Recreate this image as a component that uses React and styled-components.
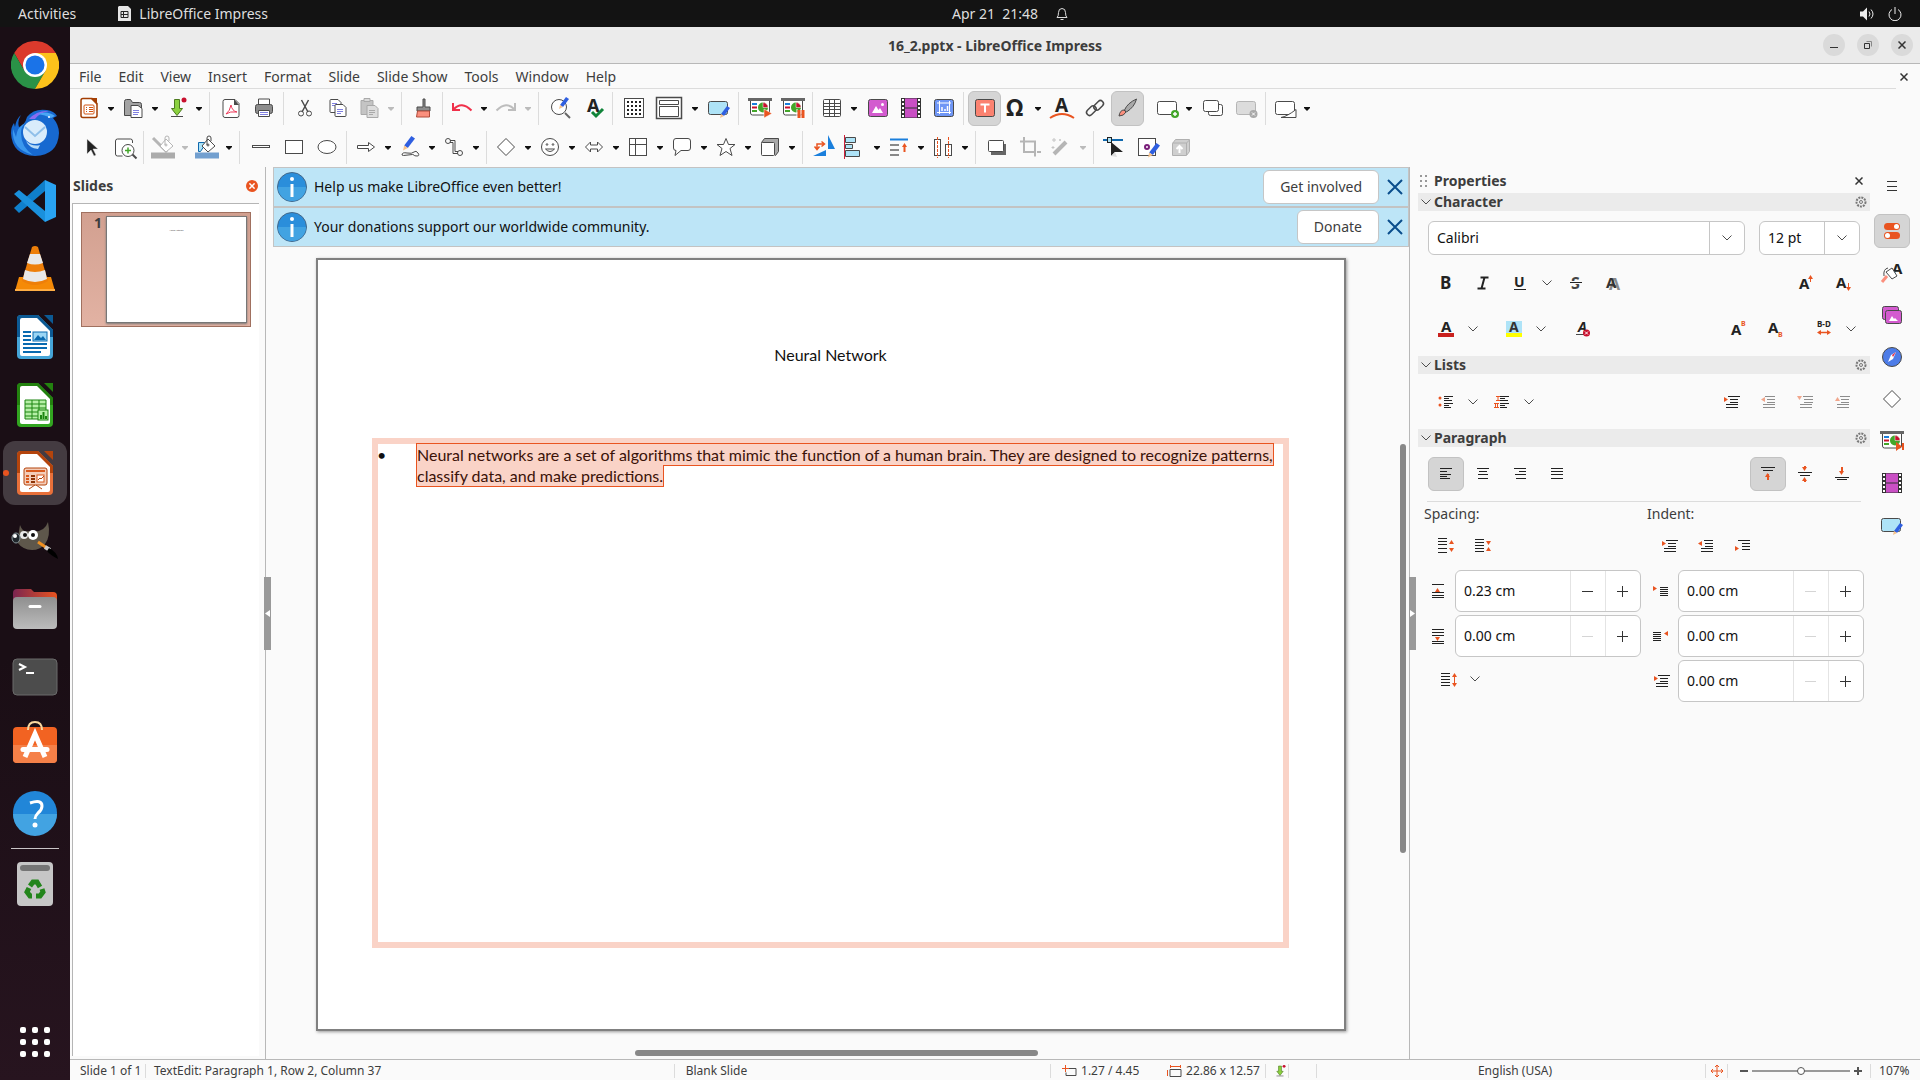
import React, { useState } from 'react';
import styled, { createGlobalStyle } from 'styled-components';

const GlobalStyle = createGlobalStyle`
  * { box-sizing: border-box; }
  body {
    margin: 0;
    font-family: "Noto Sans", "Open Sans", sans-serif;
    font-size: 14px;
    line-height: 20px;
    color: #3d3d3d;
    background: #fafafa;
  }
  button, input, select { font: inherit; color: inherit; margin: 0; }
  svg { display: block; flex: none; }
  svg text { stroke: none; font-family: "Noto Sans", sans-serif; font-weight: 700; }
`;

// ---------- icons ----------

const OR = '#e95420';
const BLUE = '#1a7fdc';
const DARK = '#4a4a4a';

const pencil = (x, y) => (
  <g stroke="none" transform={`translate(${x} ${y})`}>
    <path d="M7 0 L10 2 L4 10 L1 8 Z" fill="#2f5fe0" />
    <path d="M1 8 L4 10 L0 12 Z" fill="#f6c28b" />
  </g>
);

const lines = (x, list, color = '#222') =>
  list.map(([y, w, dx = 0], i) => (
    <path key={i} d={`M${x + dx} ${y}.5h${w}`} stroke={color} />
  ));

const tri = (x, y, dir, color = OR) => {
  const d = {
    r: 'l4 2.500 l-4 2.500z',
    l: 'm4 0 l-4 2.500 l4 2.500z',
    u: 'm0 4 l2.500 -4 l2.500 4z',
    d: 'l5 0 l-2.500 4z',
  }[dir];
  return <path d={`M${x} ${y}${d}`} fill={color} stroke="none" />;
};

const screen = (
  <>
    <path d="M2.500 4v13q0 2 2 2h15q2 0 2-2v-13" fill="#fff" />
    <path d="M0 3.500h24" stroke="#666" strokeWidth="3" />
    <path d="M4 8h5" stroke={BLUE} strokeWidth="2" />
    <path d="M4 11.500h5" stroke="#c8102e" strokeWidth="2" />
    <path d="M4 15h5" stroke="#43a62a" strokeWidth="2" />
    <circle cx="15" cy="11.500" r="5" fill="#43a62a" stroke="none" />
    <path d="M15 11.500v-5a5 5 0 0 1 5 5z" fill="#c8102e" stroke="#fff" strokeWidth=".5" />
  </>
);

const film = (
  <>
    <rect x="2" y="2" width="20" height="20" fill="#333" stroke="none" />
    <path d="M6 2.500h12v19h-12z" fill="#c94fc4" stroke="none" />
    <path d="M6 12h12" stroke="#333" />
    <path d="M4 3v18M20 3v18" stroke="#fff" strokeWidth="2" strokeDasharray="2 2" />
  </>
);

const bucket = (
  <>
    <path d="M13 4l7 7l-7 6l-6-6z" fill="#fff" />
    <path d="M12 10v-7q0-2 2-2t2 2v3" />
    <circle cx="13" cy="10" r="1" />
  </>
);

const ICONS = {
  new: (
    <>
      <path d="M6 2.500h9l5 5v12q0 2-2 2h-12q-2 0-2-2v-15q0-2 2-2z" fill="#fff" stroke="#a33e03" strokeWidth="1.500" />
      <path d="M13 2h7v7z" fill="#a33e03" stroke="none" />
      <rect x="7" y="9" width="10" height="9" rx="1" stroke="#d25310" />
      <path d="M9 11.500h1M12 11.500h4M9 13.500h1M12 13.500h4M9 15.500h1M12 15.500h4" stroke="#d25310" />
    </>
  ),
  open: (
    <>
      <path d="M3.500 19.500v-14q0-2 2-2h4l2 3h7q2 0 2 2v11z" fill="#a3a3a3" />
      <path d="M10 9.500h7l4 3v9h-11z" fill="#fff" />
      <path d="M12 14.500h6M12 16.500h6M12 18.500h5" stroke="#8080e0" />
    </>
  ),
  save: (
    <>
      <path d="M9.500 3.500h5v9h3l-5.500 7l-5.500-7h3z" fill="#8bd13f" stroke="#4d7a20" />
      <path d="M6 20.500h12" />
      <circle cx="19" cy="4" r="2.500" fill="#c8102e" stroke="none" />
    </>
  ),
  pdf: (
    <>
      <path d="M6 3.500h10l4 4v12q0 2-2 2h-12q-2 0-2-2v-14q0-2 2-2z" fill="#fff" />
      <path d="M15 3v6h5z" fill={DARK} stroke="none" />
      <path d="M7 18q4-3 5-9q1 6 6 7q-7-1-11 2z" stroke="#ec3b5b" />
    </>
  ),
  print: (
    <>
      <path d="M6.500 9v-6h11v6" fill="#fff" />
      <rect x="3.500" y="8.500" width="17" height="9" rx="2" fill="#8d8d8d" />
      <path d="M6.500 14.500h11v6h-11z" fill="#fff" />
      <path d="M8 16.500h8M8 18.500h8" stroke="#8080e0" />
    </>
  ),
  cut: (
    <>
      <path d="M8.500 4l6.500 12M15.500 4l-6.500 12" strokeWidth="1.500" />
      <circle cx="8" cy="17.500" r="2.500" />
      <circle cx="16" cy="17.500" r="2.500" />
    </>
  ),
  copy: (
    <>
      <path d="M5 3.500h7l3 3v10h-10q-1 0-1-1v-11q0-1 1-1z" fill="#fff" />
      <path d="M6 7.500h5M6 9.500h4" stroke="#8080e0" />
      <path d="M10 8.500h7l3 3v8q0 1-1 1h-9q-1 0-1-1v-10q0-1 1-1z" fill="#fff" />
      <path d="M11 13.500h6M11 15.500h6M11 17.500h4" stroke="#8080e0" />
    </>
  ),
  paste: (
    <g stroke="#a9a9a9">
      <path d="M4 4.500h12v14h-12z" fill="#c4c4c4" />
      <path d="M7 2.500h6v3h-6z" fill="#d8d8d8" />
      <path d="M10 9.500h8l3 3v9h-11z" fill="#ddd" />
      <path d="M12 14.500h6M12 16.500h6M12 18.500h4" />
    </g>
  ),
  brush: (
    <>
      <path d="M12 3h2v8h5v4h-13v-4h6z" fill="#8d8d8d" />
      <path d="M6.500 15h12v6h-13z" fill="#fb8f7d" stroke="#b04a3a" />
    </>
  ),
  undo: <path d="M3 7v7h7M3.500 13.500q8-9 18 1" stroke="#f0304a" strokeWidth="2" />,
  redo: <path d="M21 7v7h-7M20.500 13.500q-8-9-18 1" stroke="#bdbdbd" strokeWidth="2" />,
  find: (
    <>
      <circle cx="11" cy="11" r="7.500" fill="#fff" />
      <path d="M17 17l5 5" stroke="#666" strokeWidth="2" />
      {pencil(11, 1)}
    </>
  ),
  spell: (
    <>
      <text x="6" y="16" fontSize="18" fill="#222">A</text>
      <path d="M11 16l4 4l7-7" stroke="#11843a" strokeWidth="3" />
    </>
  ),
  grid: (
    <>
      <rect x="2.500" y="2.500" width="19" height="19" fill="#fff" />
      {[6, 10, 14, 18].map((y) => (
        <path key={y} d={`M5 ${y}h15`} stroke="#222" strokeWidth="2" strokeDasharray="2 2" />
      ))}
    </>
  ),
  views: (
    <>
      <rect x="-.5" y="1.500" width="25" height="21" fill="#fff" strokeWidth="1.500" />
      <path d="M2.500 4.500h19v4h-19zM2.500 10.500h19v10h-19z" />
    </>
  ),
  master: (
    <>
      <rect x="1.500" y="5.500" width="19" height="13" rx="2" fill="#aee3f7" />
      {pencil(13, 10)}
    </>
  ),
  start: (
    <>
      {screen}
      <path d="M16 13l8 4.500l-8 4.500z" fill={OR} stroke="#fff" strokeWidth=".5" />
    </>
  ),
  startHere: (
    <>
      {screen}
      <path d="M16 13v9M24 13v9M20 13v9" stroke="#fff" />
      <path d="M18 14v8M22 14v8" stroke={OR} strokeWidth="3" />
    </>
  ),
  slideEnd: (
    <>
      {screen}
      <path d="M16 13l6 4.500l-6 4.500z" fill={OR} stroke="none" />
      <path d="M23 14v7" stroke={OR} strokeWidth="2" />
    </>
  ),
  table: (
    <>
      <rect x="3.500" y="3.500" width="17" height="17" rx="1" fill="#fff" />
      <path d="M3.500 7.500h17M3.500 10.500h17M3.500 13.500h17M3.500 17.500h17M9.500 3.500v17M14.500 3.500v17" />
    </>
  ),
  image: (
    <>
      <rect x="2.500" y="3.500" width="19" height="17" rx="2" fill="#d35bcf" />
      <path d="M6 17l4-7l2.500 4l1.500-2l3 5z" fill="#fff" stroke="none" />
      <circle cx="16.500" cy="8.500" r="1.500" fill="#fff" stroke="none" />
    </>
  ),
  film,
  chart: (
    <>
      <rect x="2.500" y="3.500" width="19" height="17" rx="2" fill="#6f96f5" />
      <path d="M5 7h14M7.500 5v13M17.500 5v13M5 16.500h14" stroke="#fff" />
      <path d="M10 15v-4M13 15v-2M15.500 15v-5" stroke="#fff" strokeWidth="1.500" />
    </>
  ),
  textbox: (
    <>
      <rect x="2.500" y="3.500" width="19" height="17" rx="2" fill="#fb8270" />
      <path d="M7.500 8.500h9M12 8.500v8" stroke="#fff" strokeWidth="2" />
    </>
  ),
  omega: <text x="2" y="20" fontSize="23" fill="#222">Ω</text>,
  fontwork: (
    <>
      <text x="5" y="16" fontSize="19" fill="#222">A</text>
      <path d="M0 22q12-8 24 0" stroke={OR} strokeWidth="2" />
    </>
  ),
  link: (
    <g strokeWidth="1.500">
      <rect x="10" y="6" width="11" height="6" rx="3" transform="rotate(-45 16 9)" />
      <rect x="3" y="12" width="11" height="6" rx="3" transform="rotate(-45 8 15)" />
    </g>
  ),
  draw: (
    <>
      <path d="M20.500 3q-9 4-12 11l2 2q8-5 10-13z" fill="#a9a9a9" />
      <path d="M8 14q-4 0-5 6q5 0 7-4z" fill="#fb8f7d" />
    </>
  ),
  newSlide: (
    <>
      <rect x="2.500" y="5.500" width="19" height="13" rx="2" fill="#fff" />
      <circle cx="20" cy="18" r="4" fill="#43a62a" stroke="none" />
      <path d="M20 16v4M18 18h4" stroke="#fff" strokeWidth="1.500" />
    </>
  ),
  dupSlide: (
    <>
      <rect x="7.500" y="8.500" width="14" height="11" rx="2" fill="#fff" />
      <rect x="2.500" y="4.500" width="15" height="11" rx="2" fill="#fff" />
    </>
  ),
  delSlide: (
    <>
      <rect x="2.500" y="5.500" width="19" height="13" rx="2" fill="#dcdcdc" stroke="#b5b5b5" />
      <circle cx="19.500" cy="18" r="4" fill="#a9a9a9" stroke="none" />
      <path d="M18 16.500l3 3M21 16.500l-3 3" stroke="#fff" />
    </>
  ),
  layout: (
    <>
      <rect x="2.500" y="5.500" width="19" height="13" rx="2" fill="#fff" />
      <path d="M8 21.500q6-1 15-8v8z" fill="#fff" />
    </>
  ),
  pointer: <path d="M8 4v15l4-4l3 6l2-1l-3-6h5z" fill="#222" stroke="#ddd" strokeWidth=".5" />,
  zoom: (
    <>
      <path d="M20.500 8v-2q0-2-2-2h-13q-2 0-2 2v13q0 2 2 2h5" fill="#fff" />
      <circle cx="16" cy="15.500" r="6" fill="#fff" />
      <path d="M16 12.500v6M13 15.500h6" stroke="#43a62a" strokeWidth="1.500" />
      <path d="M20.500 19.500l4 4" strokeWidth="2" />
    </>
  ),
  lineColor: (
    <>
      <path d="M2 3l14 14" stroke="#b5b5b5" strokeWidth="3" />
      <g stroke="#b5b5b5" transform="translate(2 0)">{bucket}</g>
      <path d="M0 20.500h24" stroke="#ababab" strokeWidth="6" />
    </>
  ),
  fillColor: (
    <>
      <path d="M3.500 7.500h6v3l-4 6h-2z" fill="#aee3f7" stroke="#0f68ad" />
      {bucket}
      <path d="M0 20.500h24" stroke="#729fcf" strokeWidth="6" />
    </>
  ),
  line: <rect x="3.500" y="10.500" width="17" height="2" fill="#fff" />,
  rect: <rect x="3.500" y="5.500" width="17" height="13" fill="#fff" />,
  ellipse: <ellipse cx="12" cy="12" rx="9" ry="6.500" fill="#fff" />,
  arrow: <path d="M3.500 10.500h11v-3l6 4.500l-6 4.500v-3h-11z" fill="#fff" />,
  pencilCurve: (
    <>
      <g transform="translate(5 1) scale(1.2)">{pencil(0, 0)}</g>
      <path d="M4 20q0-3 5-2t7-1t4 1t-1 3t-3-1t-6 0t-6 0z" />
    </>
  ),
  connector: (
    <>
      <circle cx="6" cy="6" r="2.500" />
      <circle cx="18" cy="18" r="2.500" />
      <path d="M8 5.500h5v11h3M8 7.500h3v11h5" />
    </>
  ),
  diamond: <path d="M12 3.500l8.500 8.500l-8.500 8.500l-8.500-8.500z" fill="#fff" />,
  smiley: (
    <>
      <circle cx="12" cy="12" r="8.500" fill="#fff" />
      <circle cx="9" cy="9.500" r=".8" />
      <circle cx="15" cy="9.500" r=".8" />
      <path d="M7.500 14q4.500 5 9 0z" />
    </>
  ),
  doubleArrow: <path d="M3.500 12l5-5v3h7v-3l5 5l-5 5v-3h-7v3z" fill="#fff" />,
  flow: (
    <>
      <rect x="3.500" y="3.500" width="17" height="17" fill="#fff" />
      <path d="M3.500 9.500h17M9.500 3.500v17" />
    </>
  ),
  callout: <path d="M6 3.500h12q2.500 0 2.500 2.500v7q0 2.500-2.500 2.500h-7l-6 5l1-5q-2.500 0-2.500-2.500v-7q0-2.500 2.500-2.500z" fill="#fff" />,
  star: <path d="M12 3.500l2.500 6h6.500l-5 4l2 7l-6-4l-6 4l2-7l-5-4h6.500z" fill="#fff" />,
  cube: (
    <>
      <path d="M3.500 7.500l3-4h14v13l-3 4z" fill="#a9a9a9" />
      <rect x="3.500" y="7.500" width="13" height="13" rx="1" fill="#fff" />
    </>
  ),
  rotate: (
    <>
      <path d="M14 15v6h-13zM16 0l7 14h-7z" fill={BLUE} stroke="none" />
      <path d="M5 14v-5h7M9.500 6.500l3 2.500l-3 2.500M2.500 11.500l2.500 3l2.500-3" stroke={OR} strokeWidth="1.500" />
    </>
  ),
  align: (
    <>
      <path d="M1.500 0v24" stroke="#d0213c" />
      <path d="M2.500 2.500h10v5h-10zM2.500 9.500h7v4h-7zM2.500 15.500h14v6h-14z" fill="#aee3f7" />
    </>
  ),
  arrange: (
    <>
      <path d="M3 4.500h18" stroke={BLUE} strokeWidth="2" />
      <path d="M3 10h9M3 15h9M3 20h9" stroke="#888" strokeWidth="2" />
      <path d="M17.500 17v-6" stroke={OR} strokeWidth="2" />
      {tri(15, 8, 'u')}
    </>
  ),
  distribute: (
    <>
      <rect x="3.500" y="4.500" width="6" height="16" fill="#fff" />
      <rect x="14.500" y="9.500" width="6" height="11" fill="#fff" />
      <path d="M6.500 2v21M17.500 2v21" stroke={OR} strokeDasharray="3 1" />
    </>
  ),
  shadow: (
    <>
      <rect x="6" y="9" width="15" height="11" fill="#666" stroke="none" />
      <rect x="3.500" y="5.500" width="15" height="11" rx="1" fill="#fff" />
    </>
  ),
  crop: <path d="M6 2v15h11M2 6.500h15v15M19 17h4" stroke="#b5b5b5" strokeWidth="2" />,
  wand: (
    <>
      <path d="M5 19l12-12" stroke="#b5b5b5" strokeWidth="4" />
      <path d="M5 3v4M3 5h4M11 4v2M10 5h2M4 11v3M2.500 12.500h3" stroke="#c4c4c4" />
    </>
  ),
  points: (
    <>
      <path d="M0 5h20" stroke="#0f68ad" strokeWidth="2" />
      <rect x="4.500" y="2.500" width="4" height="5" fill="#aee3f7" stroke="#222" />
      <path d="M8 7v14l4-4h8z" fill="#222" stroke="none" />
      <path d="M8 21l4-4l2 5z" fill="#ddd" stroke="none" />
    </>
  ),
  glue: (
    <>
      <rect x="2.500" y="3.500" width="17" height="17" fill="#fff" />
      <circle cx="11" cy="12" r="2" stroke="#7a1f7a" strokeWidth="2" />
      <g transform="translate(12 8) scale(1.2)">{pencil(0, 0)}</g>
    </>
  ),
  extrusion: (
    <g stroke="#b0b0b0">
      <path d="M3.500 8.500l3-4h14v12l-3 4h-14z" fill="#cfcfcf" />
      <path d="M17.500 20v-12h-14M17.500 8l3-3" />
      <path d="M10.500 18v-6M7.500 14l3-3l3 3" stroke="#fff" strokeWidth="2" />
    </g>
  ),
  bold: <text x="6" y="18" fontSize="17" fill="#222">B</text>,
  italic: <path d="M9.500 6.500h8M6.500 17.500h8M13.500 6.500l-3 11" stroke="#222" strokeWidth="2" />,
  underline: (
    <>
      <text x="6" y="16" fontSize="14" fill="#222">U</text>
      <path d="M6 18.500h12" stroke="#222" />
    </>
  ),
  strike: (
    <>
      <text x="7" y="18" fontSize="16" fill="#444">S</text>
      <path d="M6 11.500h12" stroke="#fafafa" strokeWidth="3" />
      <path d="M6 11.500h12" stroke="#222" />
    </>
  ),
  shadowA: (
    <>
      <text x="8" y="19" fontSize="16" fill="#8a8a8a">A</text>
      <text x="5" y="17" fontSize="15" fill="#333">A</text>
    </>
  ),
  grow: (
    <>
      <text x="6" y="18" fontSize="15" fill="#222">A</text>
      <path d="M17.500 11v-5" stroke={OR} />
      {tri(15, 4, 'u')}
    </>
  ),
  shrink: (
    <>
      <text x="6" y="17" fontSize="15" fill="#222">A</text>
      <path d="M18.500 12v5" stroke={OR} />
      {tri(16, 16, 'd')}
    </>
  ),
  fontColor: (
    <>
      <text x="7" y="15" fontSize="15" fill="#222">A</text>
      <path d="M4 18h16" stroke="#c9211e" strokeWidth="4" />
    </>
  ),
  highlight: (
    <>
      <path d="M4 4h16v12h-16z" fill="#aee3f7" stroke="none" />
      <text x="7" y="15" fontSize="14" fill="#333">A</text>
      <path d="M4 18h16" stroke="#ffff00" strokeWidth="4" />
    </>
  ),
  clear: (
    <>
      <text x="7" y="15" fontSize="14" fontStyle="italic" fill="#222">A</text>
      <path d="M5 17.500h9" />
      <circle cx="15.500" cy="16" r="3.500" fill="#c8102e" stroke="none" />
      <path d="M14 14.500l3 3M17 14.500l-3 3" stroke="#fff" />
    </>
  ),
  superscript: (
    <>
      <text x="5" y="18" fontSize="15" fill="#222">A</text>
      <text x="15" y="9" fontSize="7" fill={OR}>B</text>
    </>
  ),
  subscript: (
    <>
      <text x="5" y="16" fontSize="15" fill="#222">A</text>
      <text x="15" y="20" fontSize="7" fill={OR}>B</text>
    </>
  ),
  charSpacing: (
    <>
      <text x="5" y="10" fontSize="8" fill="#222">B-D</text>
      <path d="M7 15.500h10" stroke={OR} strokeWidth="1.500" />
      {tri(5, 13, 'l')}
      {tri(15, 13, 'r')}
    </>
  ),
  bullets: (
    <>
      <circle cx="6" cy="8" r="1.500" fill={OR} stroke="none" />
      <circle cx="6" cy="15" r="1.500" fill={OR} stroke="none" />
      {lines(10, [[6, 9], [8, 5], [10, 8], [13, 9], [15, 5], [17, 7]])}
    </>
  ),
  numbers: (
    <>
      <path d="M6 6.500h4M8 6.500v4M6 10.500h4M4 13.500h5M5.500 13.500v4M7.500 13.500v4M4 17.500h5" stroke={OR} />
      {lines(10, [[6, 9], [8, 5], [10, 8], [13, 9], [15, 5], [17, 7]])}
    </>
  ),
  indentRight: <>{tri(5, 7, 'r')}{lines(7, [[6, 12, 2], [9, 8, 4], [12, 8, 4], [14, 12], [17, 12]])}</>,
  demote: <g opacity=".5">{tri(5, 7, 'l')}{lines(7, [[6, 10, 2], [9, 8, 4], [12, 8, 4], [14, 12], [17, 12]])}</g>,
  moveDown: <g opacity=".5">{tri(4, 6, 'd')}{lines(7, [[6, 10, 3], [9, 9, 4], [12, 9, 4], [14, 12], [17, 12]])}</g>,
  moveUp: <g opacity=".5">{tri(5, 7, 'u')}{lines(7, [[6, 10, 3], [9, 8, 4], [12, 8, 4], [14, 12], [17, 12]])}</g>,
  left: <>{lines(6, [[6, 12], [9, 7], [12, 11], [14, 7], [16, 10]])}</>,
  center: <>{lines(6, [[6, 12], [9, 8, 2], [12, 10, 1], [16, 10, 1]])}</>,
  right: <>{lines(6, [[6, 12], [9, 7, 5], [12, 11, 1], [16, 10, 2]])}</>,
  justify: <>{lines(6, [[6, 12], [9, 12], [12, 12], [16, 12]])}</>,
  vTop: <>{lines(5, [[5, 14], [8, 10, 2]])}<path d="M12 18v-6" stroke={OR} strokeWidth="2" />{tri(9, 11, 'u')}</>,
  vCenter: <>{lines(5, [[10, 14], [13, 10, 2]])}<path d="M12 4v2M12 18v2" stroke={OR} strokeWidth="2" />{tri(9, 5, 'd')}{tri(9, 15, 'u')}</>,
  vBottom: <>{lines(5, [[15, 14], [17, 10, 2]])}<path d="M12 5v5" stroke={OR} strokeWidth="2" />{tri(9, 9, 'd')}</>,
  paraInc: <>{lines(4, [[4, 9], [7, 9], [10, 9], [14, 9], [18, 9]])}{tri(15, 6, 'u')}{tri(15, 14, 'd')}</>,
  paraDec: <>{lines(4, [[5, 9], [8, 9], [11, 9], [14, 9], [17, 9]])}{tri(15, 7, 'd')}{tri(15, 13, 'u')}</>,
  indentDec: <>{tri(4, 7, 'l')}{lines(7, [[6, 9, 3], [9, 8, 4], [12, 8, 4], [14, 12], [17, 12]])}</>,
  hanging: <>{tri(4, 12, 'r')}{lines(7, [[6, 12], [9, 8, 4], [12, 8, 4], [15, 8, 4]])}</>,
  above: <>{lines(6, [[5, 12], [13, 12], [16, 12], [18, 12]])}{tri(9, 9, 'u')}</>,
  below: <>{lines(6, [[5, 12], [8, 12], [11, 12], [17, 12], [19, 12]])}{tri(9, 13, 'd')}</>,
  before: <>{tri(4, 7, 'r')}{lines(11, [[8, 8], [10, 8], [12, 8], [14, 8], [16, 8]])}</>,
  after: <>{tri(15, 7, 'l')}{lines(4, [[8, 8], [10, 8], [12, 8], [14, 8], [16, 8]])}</>,
  lineSpacing: <>{lines(7, [[6, 9], [9, 9], [12, 9], [15, 9], [18, 9]])}<path d="M20.500 9v8" stroke={OR} />{tri(18, 6, 'u')}{tri(18, 16, 'd')}</>,
  menu: <path d="M7 7.500h10M7 12.500h10M7 16.500h10" stroke="#333" />,
  properties: (
    <>
      <rect x="4" y="4" width="16" height="7" rx="3.500" fill={OR} stroke="none" />
      <circle cx="16.500" cy="7.500" r="2.500" fill="#fff" stroke="none" />
      <rect x="4" y="13" width="16" height="7" rx="3.500" fill={OR} stroke="none" />
      <circle cx="7.500" cy="16.500" r="2.500" fill="#fff" stroke="none" />
    </>
  ),
  styles: (
    <>
      <text x="12" y="13" fontSize="15" fill="#222">A</text>
      <path d="M6 11l6-4l5 8l-5 3z" fill="#fff" />
      <path d="M2 21l5-6" stroke="#fb8f7d" strokeWidth="3" />
      <path d="M8 7q-5 1-4 8" />
    </>
  ),
  gallery: (
    <>
      <rect x="2.500" y="3.500" width="16" height="13" rx="2" fill="#d35bcf" />
      <rect x="5.500" y="7.500" width="16" height="13" rx="2" fill="#d35bcf" />
      <path d="M9 18l3-5l2 3l1-1l3 3z" fill="#fff" stroke="none" />
    </>
  ),
  navigator: (
    <>
      <circle cx="12" cy="12" r="9.500" fill="#4d7ce8" />
      <path d="M16 7l-3 7l-5 3l3-7z" fill="#fff" stroke="none" />
      <path d="M16 7l-3 5l-1-2z" fill="#e0304a" stroke="none" />
    </>
  ),
};

const Icon = ({ name, size = 24 }) => (
  <svg width={size} height={size} viewBox="0 0 24 24" fill="none" stroke={DARK} strokeWidth="1" overflow="visible" aria-hidden="true">
    {ICONS[name]}
  </svg>
);

const Chevron = () => (
  <svg width="10" height="6" viewBox="0 0 10 6" fill="none" stroke="#4d4d4d" aria-hidden="true">
    <path d="M.5 .5l4.500 4.500l4.500-4.500" />
  </svg>
);

const Cross = ({ size = 8, color = '#333', width = 1.5 }) => (
  <svg width={size} height={size} viewBox="0 0 8 8" stroke={color} strokeWidth={(width * 8) / size} aria-hidden="true">
    <path d="M.5 .5l7 7M7.500 .5l-7 7" />
  </svg>
);

const Gear = () => (
  <svg width="12" height="12" viewBox="0 0 12 12" fill="none" stroke="#777" aria-hidden="true">
    <circle cx="6" cy="6" r="4.500" strokeWidth="2" strokeDasharray="2 1" />
    <circle cx="6" cy="6" r="1.500" />
  </svg>
);

// ---------- dock icons ----------

const DocIcon = ({ color, light, children }) => (
  <svg width="48" height="48" viewBox="0 0 48 48">
    <path d="M10 2h17l15 15v25q0 4-4 4h-28q-4 0-4-4v-36q0-4 4-4z" fill={light} />
    <path d="M10 2h17l15 15v7h-36v-18q0-4 4-4z" fill={color} />
    <path d="M33 2h9v9z" fill={color} />
    <path d="M11 5h15l13 13v23q0 2-2 2h-26q-2 0-2-2v-34q0-2 2-2z" fill="#fff" />
    {children}
  </svg>
);

const DOCK = [
  {
    label: 'Google Chrome',
    art: (
      <svg width="48" height="48" viewBox="0 0 48 48">
        <path d="M3.200 12A24 24 0 0 1 44.800 12H24L13.600 30Z" fill="#db3a2c" />
        <path d="M3.200 12L13.600 30H34.400L24 48A24 24 0 0 1 3.200 12Z" fill="#2a9247" />
        <path d="M44.800 12A24 24 0 0 1 24 48L34.400 30L24 12Z" fill="#fcc21b" />
        <circle cx="24" cy="24" r="12" fill="#fff" />
        <circle cx="24" cy="24" r="9.500" fill="#1a73e8" />
      </svg>
    ),
  },
  {
    label: 'Thunderbird',
    art: (
      <svg width="48" height="48" viewBox="0 0 48 48">
        <path d="M10 6q-4 6-2 12q6-2 8-10q7-9 20-7q7 1 10 6l-4 2q6 7 6 15q-1 22-24 23q-23-1-24-23q0-6 3-10l1 4q1-8 6-12z" fill="#1769d0" />
        <path d="M2 20q-2 20 20 26q-12-8-12-22q0-6 4-10q-8 4-9 14z" fill="#3a98ee" />
        <path d="M18 10q8-9 20-8q-10 2-14 8z" fill="#8b6cf0" />
        <path d="M27 5q9-4 17 2l-4 2q-6-3-13-4z" fill="#4aa6f5" />
        <circle cx="38" cy="8" r="1" fill="#fff" />
        <circle cx="24" cy="23" r="12" fill="#d9ecfb" />
        <path d="M14 18l10 9l10-9" fill="none" stroke="#8fbfe9" strokeWidth="2" />
        <path d="M15 32q6 6 14 4l-2 4q-9-1-12-8z" fill="#b8dcf7" />
      </svg>
    ),
  },
  {
    label: 'Visual Studio Code',
    art: (
      <svg width="48" height="48" viewBox="0 0 48 48">
        <path d="M34 3L3 31L8 36L34 14Z" fill="#0f7fcb" />
        <path d="M3 17L8 13L34 34V45Z" fill="#1a90dc" />
        <path d="M34 3L45 8V40L34 45Z" fill="#29a3f2" />
      </svg>
    ),
  },
  {
    label: 'VLC',
    art: (
      <svg width="48" height="48" viewBox="0 0 48 48">
        <path d="M8 32h32l4 14h-40z" fill="#f58a07" />
        <path d="M4 44h40v2h-40z" fill="#ffae45" />
        <path d="M21 2q3-2 6 0l10 34q-13 8-26 0z" fill="#ee7f0a" />
        <path d="M19 9h10l3 9q-8 3-16 0z" fill="#e9e9e9" />
        <path d="M14 25q10 4 20 0l2 9q-12 6-24 0z" fill="#e9e9e9" />
      </svg>
    ),
  },
  {
    label: 'LibreOffice Writer',
    art: (
      <DocIcon color="#0c5a94" light="#45a5d8">
        <path d="M12 19h8M12 23h8M12 27h8M12 31h24M12 35h24M12 39h18" stroke="#0a6ab0" strokeWidth="2" />
        <rect x="22" y="19" width="14" height="9" fill="#9bd6f5" stroke="#0a6ab0" />
        <path d="M23 27l4-5l3 3l2-2l3 4z" fill="#0a6ab0" />
      </DocIcon>
    ),
  },
  {
    label: 'LibreOffice Calc',
    art: (
      <DocIcon color="#23820f" light="#32a520">
        <path d="M14 19h21v19h-21z" fill="#b6efa6" />
        <path d="M14 19h21v19h-21zM14 23h21M14 27h21M14 31h21M14 35h21M21 19v19M28 19v19" fill="none" stroke="#1c8510" />
        <rect x="27" y="29" width="10" height="10" fill="#b6efa6" stroke="#1c8510" />
        <path d="M30 38v-4M32.500 38v-7M35 38v-3" stroke="#1c8510" strokeWidth="2" />
      </DocIcon>
    ),
  },
  {
    label: 'LibreOffice Impress',
    active: true,
    art: (
      <DocIcon color="#b4440c" light="#e8703a">
        <rect x="13" y="19" width="23" height="17" rx="2" fill="#f3cdb9" stroke="#b4440c" />
        <path d="M15 22h19M15 27h3M15 30h3M15 33h3" stroke="#d9591c" strokeWidth="2" />
        <path d="M20 27h4M20 30h4M20 33h4" stroke="#8e3406" strokeWidth="2" />
        <rect x="26" y="26" width="7" height="7" fill="#fff" stroke="#d9591c" />
        <path d="M27 31l2-2l1 1l3-3M24 36l-6 4M25 36l6 4" fill="none" stroke="#b4440c" />
      </DocIcon>
    ),
  },
  {
    label: 'GIMP',
    art: (
      <svg width="48" height="48" viewBox="0 0 48 48">
        <path d="M9 8q3 8 8 6q16 3 20-9q3 14-3 22q-5 6-13 6q-9 0-15-8q2-10 3-17z" fill="#5e574b" />
        <circle cx="13" cy="18" r="4" fill="#e8e8e8" />
        <circle cx="22" cy="18" r="5" fill="#fff" />
        <circle cx="14" cy="18" r="2" fill="#111" />
        <circle cx="22" cy="18" r="2" fill="#111" />
        <ellipse cx="5" cy="21" rx="4" ry="5" fill="#20262b" stroke="#8b9aa0" />
        <circle cx="4" cy="19" r="2" fill="#fff" />
        <path d="M27 25l9 6" stroke="#f09020" strokeWidth="3" />
        <path d="M34 30l5 3" stroke="#ccc" strokeWidth="4" />
        <path d="M38 31q8 4 9 11q-8-4-11-8z" fill="#000" />
      </svg>
    ),
  },
  {
    label: 'Files',
    art: (
      <svg width="48" height="48" viewBox="0 0 48 48">
        <defs>
          <linearGradient id="tab"><stop offset="0" stopColor="#7a2550" /><stop offset="1" stopColor="#e95420" /></linearGradient>
          <linearGradient id="body" x2="0" y2="1"><stop offset="0" stopColor="#8f8f8f" /><stop offset="1" stopColor="#bcbcbc" /></linearGradient>
        </defs>
        <path d="M2 16v-8q0-4 4-4h14l3 3h19q4 0 4 4v6z" fill="url(#tab)" />
        <rect x="2" y="12" width="44" height="32" rx="4" fill="url(#body)" />
        <path d="M19 21.500h10" stroke="#fff" strokeWidth="3" strokeLinecap="round" />
      </svg>
    ),
  },
  {
    label: 'Terminal',
    art: (
      <svg width="48" height="48" viewBox="0 0 48 48">
        <rect x="2" y="6" width="44" height="36" rx="4" fill="#4c4c4c" stroke="#6a6a6a" />
        <path d="M8 11l6 3l-6 3M15 20h8" fill="none" stroke="#fff" strokeWidth="2" />
      </svg>
    ),
  },
  {
    label: 'Ubuntu Software',
    art: (
      <svg width="48" height="48" viewBox="0 0 48 48">
        <rect x="2" y="6" width="44" height="36" rx="4" fill="#f26322" />
        <path d="M2 24h44v14q0 4-4 4h-36q-4 0-4-4z" fill="#f58048" />
        <path d="M17 9q0-8 7-8t7 8" fill="none" stroke="#fbd9a0" strokeWidth="2" />
        <path d="M14 36l10-23l10 23" fill="none" stroke="#fff" strokeWidth="5" />
        <path d="M12 28.500h24" stroke="#fff" strokeWidth="5" strokeLinecap="round" />
      </svg>
    ),
  },
  {
    label: 'Help',
    art: (
      <svg width="48" height="48" viewBox="0 0 48 48">
        <circle cx="24" cy="24" r="22" fill="#2186d8" />
        <path d="M2 25a22 22 0 0 0 44 0z" fill="#42a3e2" />
        <path d="M19 14q12-4 12 3q0 4-4 7q-3 3-3 6" fill="none" stroke="#fff" strokeWidth="3" />
        <circle cx="24" cy="36" r="2.500" fill="#fff" />
      </svg>
    ),
  },
];

const TrashArt = () => (
  <svg width="48" height="48" viewBox="0 0 48 48">
    <rect x="6" y="2" width="36" height="44" rx="4" fill="#c6c6c6" />
    <rect x="9" y="5" width="30" height="6" rx="3" fill="#757575" />
    <g fill="none" stroke="#23851b" strokeWidth="5">
      <path d="M19 26l3-4h4l3 5" />
      <path d="M31 29l1 3l-3 4h-4" />
      <path d="M21 36h-2l-3-4l2-4" />
    </g>
  </svg>
);

const GridArt = () => (
  <svg width="32" height="32" viewBox="0 0 32 32" fill="#fff">
    {[1, 13, 25].map((y) => [1, 13, 25].map((x) => <rect key={x + '-' + y} x={x} y={y} width="6" height="6" rx="2" />))}
  </svg>
);

// ---------- layout ----------

const Desktop = styled.div`
  display: flex;
  flex-direction: column;
  height: 100vh;
  overflow: hidden;
`;

const TopBar = styled.header`
  display: grid;
  grid-template-columns: 1fr auto 1fr;
  align-items: center;
  height: 27px;
  padding: 0 18px;
  background: #131313;
  color: #dedede;
`;

const TopGroup = styled.div`
  display: flex;
  align-items: center;
  justify-content: ${(p) => (p.$end ? 'flex-end' : 'flex-start')};
  gap: ${(p) => p.$gap || 8}px;
`;

const TopButton = styled.button`
  display: flex;
  align-items: center;
  gap: 8px;
  padding: 0;
  border: 0;
  background: none;
  white-space: pre;
`;

const Workspace = styled.div`
  display: flex;
  flex: 1;
  min-height: 0;
`;

const Dock = styled.nav`
  display: flex;
  flex-direction: column;
  align-items: center;
  gap: 4px;
  width: 70px;
  padding: 6px 0;
  background: linear-gradient(#1a0e15 60%, #27141f);
`;

const DockItem = styled.button`
  position: relative;
  display: flex;
  align-items: center;
  justify-content: center;
  width: 64px;
  height: 64px;
  padding: 0;
  border: 0;
  border-radius: 12px;
  background: ${(p) => (p.$active ? '#443b41' : 'transparent')};

  &::before {
    content: '';
    display: ${(p) => (p.$active ? 'block' : 'none')};
    position: absolute;
    left: 0;
    width: 6px;
    height: 6px;
    border-radius: 3px;
    background: #e95420;
  }
`;

const DockLine = styled.hr`
  width: 48px;
  margin: -1px 0 -1px;
  border: 0;
  border-top: 1px solid #c9c5c7;
`;

const DockSpace = styled.div`
  flex: 1;
`;

const Window = styled.div`
  display: flex;
  flex-direction: column;
  flex: 1;
  min-width: 0;
`;

const TitleBar = styled.div`
  display: grid;
  grid-template-columns: 1fr auto 1fr;
  align-items: center;
  height: 37px;
  padding: 0 7px;
  border-bottom: 1px solid #b8b8b8;
  background: #ebebeb;
`;

const WindowTitle = styled.h1`
  margin: 0;
  padding-top: 1px;
  font-size: 14px;
  font-weight: 700;
`;

const WindowButtons = styled.div`
  display: flex;
  justify-content: flex-end;
  gap: 12px;
`;

const RoundButton = styled.button`
  display: flex;
  align-items: center;
  justify-content: center;
  width: 22px;
  height: 22px;
  padding: 0;
  border: 0;
  border-radius: 50%;
  background: #dadada;
`;

const MenuBar = styled.div`
  display: flex;
  align-items: center;
  height: 25px;
  padding-right: 12px;
`;

const MenuList = styled.nav`
  display: flex;
  align-items: center;
  gap: 1px;
  flex: 1;
  height: 25px;
  margin-right: 4px;
  padding-left: 1px;
  border-bottom: 1px solid #dcdcdc;
`;

const MenuItem = styled.button`
  padding: 2px 8px 0;
  border: 0;
  background: none;
`;

const PlainButton = styled.button`
  display: flex;
  align-items: center;
  justify-content: center;
  padding: 0;
  border: 0;
  background: none;
`;

const Toolbar = styled.div`
  display: flex;
  align-items: center;
  height: 39px;
  padding-left: 4px;
`;

const ToolButton = styled.button`
  display: flex;
  align-items: center;
  justify-content: center;
  width: ${(p) => p.$w}px;
  height: 35px;
  padding: 0 0 1px ${(p) => (p.$w === 33 ? 1 : 0)}px;
  border: 1px solid ${(p) => (p.$pressed ? '#c2c2c2' : 'transparent')};
  border-radius: 6px;
  background: ${(p) => (p.$pressed ? '#d5d5d5' : 'none')};
`;

const DropButton = styled.button`
  display: flex;
  align-items: center;
  justify-content: center;
  width: 14px;
  height: 35px;
  padding: 1px 0 0;
  border: 0;
  background: none;
`;

const ToolLine = styled.div`
  width: 1px;
  height: 33px;
  margin: 0 4px 0 3px;
  background: ${(p) => (p.$hidden ? 'transparent' : '#dcdcdc')};
`;

const Body = styled.div`
  display: flex;
  flex: 1;
  min-height: 0;
`;

const SlidesPanel = styled.aside`
  display: flex;
  flex-direction: column;
  width: 194px;
  padding: 0 5px 3px 2px;
`;

const PanelHead = styled.div`
  display: flex;
  align-items: center;
  justify-content: space-between;
  height: 36px;
  padding: 2px 1px 0;
  font-weight: 700;
`;

const SlideClose = styled.button`
  display: flex;
  align-items: center;
  justify-content: center;
  width: 12px;
  height: 12px;
  padding: 0;
  border: 0;
  border-radius: 50%;
  background: #e95420;
`;

const SlideList = styled.div`
  flex: 1;
  padding: 8px;
  border: solid #b5b5b5;
  border-width: 1px 0 0 1px;
  background: #fff;
`;

const Thumb = styled.button`
  display: flex;
  align-items: stretch;
  gap: 4px;
  width: 170px;
  height: 115px;
  padding: 3px 3px 3px 12px;
  border: 1px solid #a0705f;
  background: linear-gradient(#d2a090, #e2b2a3);
  font-weight: 700;
  text-align: left;
`;

const ThumbNumber = styled.span`
  margin-top: -3px;
`;

const ThumbPage = styled.span`
  flex: 1;
  padding-top: 12px;
  border: 1px solid #777;
  background: #fff;
  box-shadow: 0 1px 2px #777;
  color: #333;
  font: 2px/3px Lato, sans-serif;
  text-align: center;
`;

const Splitter = styled.div`
  display: flex;
  align-items: center;
  width: 7px;
  background: linear-gradient(#b8b8b8, #b8b8b8) ${(p) => p.$line}px 0 / 1px 100% no-repeat;
`;

const Handle = styled.button`
  display: flex;
  align-items: center;
  justify-content: center;
  width: 7px;
  height: 73px;
  padding: 0;
  border: 0;
  background: #999;
`;

const Center = styled.main`
  display: flex;
  flex-direction: column;
  flex: 1;
  min-width: 0;
  margin-left: 2px;
`;

const InfoBar = styled.div`
  display: flex;
  align-items: center;
  height: 40px;
  padding: 0 5px 0 3px;
  border: 1px solid #c3c3c3;
  background: #bde5f7;
  color: #111;
`;

const InfoText = styled.span`
  flex: 1;
  margin-left: 7px;
`;

const InfoButton = styled.button`
  height: 34px;
  margin-right: 8px;
  padding: 0 16px;
  border: 1px solid #c6c6c6;
  border-radius: 6px;
  background: #fff;
  color: #3d3d3d;
`;

const Canvas = styled.div`
  display: grid;
  grid-template-columns: 1fr 6px;
  grid-template-rows: 1fr 6px;
  column-gap: 54px;
  row-gap: 19px;
  flex: 1;
  min-height: 0;
  padding: 11px 3px 3px 43px;
`;

const Page = styled.section`
  display: flex;
  flex-direction: column;
  padding: 84px 55px 81px 54px;
  border: 2px solid #808080;
  background: #fff;
  box-shadow: 1px 1px 3px #999;
  color: #111;
  font-family: Lato, "Open Sans", sans-serif;
`;

const SlideTitle = styled.h2`
  margin: 0;
  font-size: 16px;
  font-weight: 400;
  line-height: 22px;
  text-align: center;
`;

const TextFrame = styled.div`
  flex: 1;
  margin-top: 72px;
  border: 6px solid #fad3c7;
`;

const BulletList = styled.ul`
  margin: 0;
  padding-left: 39px;
  list-style: none;
  font-size: 16px;
  line-height: 21px;
`;

const Bullet = styled.li`
  &::before {
    content: '•';
    float: left;
    margin-left: -40px;
  }
`;

const Selected = styled.mark`
  padding: 1px 0;
  background: #fad3c7;
  color: #3a1208;
  outline: 1px solid #e95420;
`;

const ScrollV = styled.div`
  display: flex;
  flex-direction: column;
  padding-top: 186px;

  &::after {
    content: '';
    height: 409px;
    border-radius: 3px;
    background: #888;
  }
`;

const ScrollH = styled.div`
  display: flex;
  justify-content: center;
  padding-left: 10px;

  &::after {
    content: '';
    width: 403px;
    border-radius: 3px;
    background: #888;
  }
`;

const Sidebar = styled.aside`
  display: flex;
  width: 504px;
`;

const Deck = styled.div`
  width: 454px;
  padding-left: 2px;
`;

const DeckTitle = styled.div`
  display: flex;
  align-items: center;
  height: 26px;
  padding: 2px 7px 0 2px;
  font-weight: 700;
`;

const DeckName = styled.span`
  flex: 1;
  margin-left: 6px;
`;

const SectionHead = styled.div`
  display: flex;
  align-items: center;
  gap: 3px;
  height: 18px;
  padding: 0 3px;
  background: #ebebeb;
  font-weight: 700;
`;

const SectionName = styled.span`
  flex: 1;
`;

const Controls = styled.div`
  display: flex;
  align-items: center;
  gap: 1px;
  height: ${(p) => p.$h}px;
  padding: 0 10px;
`;

const Push = styled.div`
  flex: 1;
`;

const SmallButton = styled.button`
  display: flex;
  align-items: center;
  justify-content: center;
  width: ${(p) => (p.$arrow ? 16 : 36)}px;
  height: 34px;
  padding: 0;
  border: 1px solid ${(p) => (p.$pressed ? '#c2c2c2' : 'transparent')};
  border-radius: 6px;
  background: ${(p) => (p.$pressed ? '#d5d5d5' : 'none')};
`;

const Gap = styled.div`
  width: ${(p) => p.$w}px;
`;

const Combo = styled.label`
  position: relative;
  display: flex;
  flex: ${(p) => (p.$grow ? 1 : 'none')};
  width: ${(p) => p.$w || 0}px;
  height: 34px;
  border: 1px solid #c6c6c6;
  border-radius: 6px;
  background: #fff;
  color: #111;
`;

const ComboSelect = styled.select`
  width: 100%;
  padding: 0 36px 0 8px;
  border: 0;
  appearance: none;
  background: none;
`;

const ComboArrow = styled.span`
  position: absolute;
  right: 0;
  display: flex;
  align-items: center;
  justify-content: center;
  width: 35px;
  height: 32px;
  border-left: 1px solid #c6c6c6;
  pointer-events: none;
`;

const Rule = styled.hr`
  margin: 0 9px 2px;
  border: 0;
  border-top: 1px solid #dcdcdc;
`;

const Halves = styled.div`
  display: grid;
  grid-template-columns: minmax(0, 1fr) minmax(0, 1fr);
  column-gap: 6px;
  padding: 0 6px;
`;

const Half = styled.div`
  display: flex;
  flex-direction: column;
  gap: 3px;
`;

const HalfLabel = styled.div`
  height: 20px;
`;

const HalfButtons = styled.div`
  display: flex;
  gap: 1px;
  height: 40px;
  padding: 2px 0 0 4px;
`;

const SpinRow = styled.div`
  display: flex;
  align-items: center;
  gap: 5px;
  height: 42px;
  padding-left: 2px;
`;

const SpinBox = styled.div`
  display: flex;
  flex: 1;
  min-width: 0;
  height: 42px;
  border: 1px solid #c6c6c6;
  border-radius: 6px;
  background: #fff;
  color: #111;
`;

const SpinInput = styled.input`
  flex: 1;
  width: 0;
  min-width: 0;
  padding: 0 8px;
  border: 0;
  background: none;
`;

const SpinButton = styled.button`
  display: flex;
  align-items: center;
  justify-content: center;
  width: 35px;
  padding: 0 1px 0 0;
  border: 0;
  border-left: 1px solid #e4e4e4;
  background: none;
`;

const TabBar = styled.nav`
  display: flex;
  flex-direction: column;
  align-items: center;
  gap: 8px;
  flex: 1;
  padding: 2px 6px 0 0;
`;

const Tab = styled(SmallButton)`
  &:first-child { margin-bottom: 3px; }
`;

const StatusBar = styled.footer`
  display: flex;
  align-items: center;
  height: 21px;
  padding-top: 2px;
  border-top: 1px solid #b8b8b8;
  font-size: 12px;
  line-height: 18px;
`;

const Cell = styled.div`
  display: flex;
  align-items: center;
  justify-content: ${(p) => (p.$center ? 'center' : 'flex-start')};
  gap: 4px;
  flex: ${(p) => (p.$grow ? p.$grow + ' 1 0' : 'none')};
  width: ${(p) => (p.$w ? p.$w + 'px' : 'auto')};
  height: 14px;
  padding-left: ${(p) => (p.$pad === undefined ? 8 : p.$pad)}px;
  border-right: 1px solid ${(p) => (p.$last ? 'transparent' : '#dcdcdc')};
  white-space: nowrap;
`;

const ZoomSlider = styled.input`
  width: 98px;
  height: 10px;
  margin: 0;
  appearance: none;
  background: linear-gradient(#999, #999) 0 4px / 100% 2px no-repeat;

  &::-webkit-slider-thumb {
    appearance: none;
    width: 8px;
    height: 8px;
    border: 1px solid #555;
    border-radius: 50%;
    background: #fff;
  }
`;

// ---------- data ----------

const MENUS = ['File', 'Edit', 'View', 'Insert', 'Format', 'Slide', 'Slide Show', 'Tools', 'Window', 'Help'];

// '|' separator, '.' empty gap, '+' has a drop-down, '-' disabled drop-down, '!' pressed
const STANDARD = 'new+ open+ save+ | pdf print | cut copy paste- | brush | undo+ redo- | find spell | grid views+ master | start startHere | table+ image film chart | textbox! omega+ fontwork link draw! . newSlide+ dupSlide delSlide | layout+';
const DRAWING = 'pointer zoom | lineColor- fillColor+ | line rect ellipse | arrow+ pencilCurve+ connector+ | diamond+ smiley+ doubleArrow+ flow+ callout+ star+ cube+ | rotate align+ arrange+ distribute+ | shadow crop wand- | points glue extrusion';

const TABS = ['menu', 'properties', 'styles', 'gallery', 'navigator', 'diamond', 'slideEnd', 'film', 'master'];

const ToolRow = ({ items, label }) => (
  <Toolbar role="toolbar" aria-label={label}>
    {items.split(' ').map((item, i) => {
      if (item === '|' || item === '.') return <ToolLine key={i} $hidden={item === '.'} />;
      const name = item.replace(/[+\-!]/, '');
      const flag = item.slice(name.length);
      const drop = flag === '+' || flag === '-';
      return (
        <React.Fragment key={i}>
          <ToolButton aria-label={name} $w={name === 'views' ? 38 : drop ? 30 : 33} $pressed={flag === '!'}>
            <Icon name={name} />
          </ToolButton>
          {drop && (
            <DropButton aria-label={name + ' options'}>
              <svg width="6" height="4" viewBox="0 0 6 4" fill={flag === '-' ? '#bbb' : '#111'}>
                <path d="M0 0h6v1l-3 3l-3-3z" />
              </svg>
            </DropButton>
          )}
        </React.Fragment>
      );
    })}
  </Toolbar>
);

const Tool = ({ name, pressed }) => (
  <SmallButton aria-label={name} $pressed={pressed}>
    <Icon name={name} />
  </SmallButton>
);

const ToolArrow = ({ name }) => (
  <SmallButton aria-label={name + ' options'} $arrow>
    <Chevron />
  </SmallButton>
);

const Section = ({ title }) => (
  <SectionHead>
    <Chevron />
    <SectionName>{title}</SectionName>
    <PlainButton aria-label={title + ' options'}><Gear /></PlainButton>
  </SectionHead>
);

const Spin = ({ icon, label, initial }) => {
  const [value, setValue] = useState(initial);
  const step = (d) => setValue(Math.max(0, value + d));
  return (
    <SpinRow>
      <Icon name={icon} />
      <SpinBox>
        <SpinInput aria-label={label} value={value.toFixed(2) + ' cm'} readOnly />
        <SpinButton aria-label="Decrease" onClick={() => step(-0.1)}>
          <svg width="11" height="11" stroke={value > 0 ? '#333' : '#d5d5d5'}><path d="M0 5.500h11" /></svg>
        </SpinButton>
        <SpinButton aria-label="Increase" onClick={() => step(0.1)}>
          <svg width="11" height="11" stroke="#333"><path d="M0 5.500h11M5.500 0v11" /></svg>
        </SpinButton>
      </SpinBox>
    </SpinRow>
  );
};

const Info = ({ text, action }) => (
  <InfoBar>
    <svg width="30" height="30" viewBox="0 0 30 30">
      <circle cx="15" cy="15" r="14.500" fill="#2a8edb" stroke="#44688a" />
      <path d="M1 15a14 14 0 0 0 28 0z" fill="#42a3e2" />
      <path d="M15 12v13" stroke="#fff" strokeWidth="3" />
      <circle cx="15" cy="7" r="2" fill="#fff" />
    </svg>
    <InfoText>{text}</InfoText>
    <InfoButton>{action}</InfoButton>
    <PlainButton aria-label="Close"><Cross size={16} color="#0a4d8c" width={2} /></PlainButton>
  </InfoBar>
);

const App = () => {
  const [zoom, setZoom] = useState(50);

  return (
    <Desktop>
      <GlobalStyle />
      <TopBar>
        <TopGroup $gap={42}>
          <TopButton>Activities</TopButton>
          <TopButton>
            <svg width="13" height="15" viewBox="0 0 13 15">
              <path d="M1 0h9l3 3v12h-13v-14z" fill="#e6e6e6" />
              <path d="M3 5.500h7v6h-7zM3 8.500h7M5.500 5.500v6" fill="none" stroke="#222" />
            </svg>
            LibreOffice Impress
          </TopButton>
        </TopGroup>
        <TopGroup $gap={18}>
          <Gap $w={82} />
          <TopButton>Apr 21  21:48</TopButton>
          <svg width="12" height="14" viewBox="0 0 12 14" fill="none" stroke="#dedede">
            <path d="M1 10.500h10q-1.500-1-1.500-5t-3.500-4t-3.500 4t-1.500 5zM4.500 12.500h3" />
          </svg>
        </TopGroup>
        <TopGroup $end $gap={13}>
          <svg width="15" height="14" viewBox="0 0 15 14" fill="none" stroke="#eee">
            <path d="M0 4.500h3l4-4v13l-4-4h-3z" fill="#eee" stroke="none" />
            <path d="M9 4.500q2 2.500 0 5M11 2.500q4 4.500 0 9" />
          </svg>
          <svg width="14" height="14" viewBox="0 0 14 14" fill="none" stroke="#eee">
            <path d="M4 2.500a6 6 0 1 0 6 0M7 0v7" />
          </svg>
        </TopGroup>
      </TopBar>

      <Workspace>
        <Dock>
          {DOCK.map((app) => (
            <DockItem key={app.label} aria-label={app.label} $active={app.active}>{app.art}</DockItem>
          ))}
          <DockLine />
          <DockItem aria-label="Trash"><TrashArt /></DockItem>
          <DockSpace />
          <DockItem aria-label="Show Applications"><GridArt /></DockItem>
        </Dock>

        <Window>
          <TitleBar>
            <span />
            <WindowTitle>16_2.pptx - LibreOffice Impress</WindowTitle>
            <WindowButtons>
              <RoundButton aria-label="Minimize"><svg width="8" height="8" stroke="#333"><path d="M0 6.500h8" /></svg></RoundButton>
              <RoundButton aria-label="Restore">
                <svg width="8" height="8" fill="none" stroke="#333"><path d="M.5 2.500h5v5h-5z" /><path d="M2.500 .5h5v5" stroke="#888" /></svg>
              </RoundButton>
              <RoundButton aria-label="Close"><Cross /></RoundButton>
            </WindowButtons>
          </TitleBar>

          <MenuBar>
            <MenuList>
              {MENUS.map((m) => <MenuItem key={m}>{m}</MenuItem>)}
            </MenuList>
            <PlainButton aria-label="Close document"><Cross /></PlainButton>
          </MenuBar>

          <ToolRow items={STANDARD} label="Standard" />
          <ToolRow items={DRAWING} label="Drawing" />

          <Body>
            <SlidesPanel>
              <PanelHead>
                Slides
                <SlideClose aria-label="Close slides"><Cross size={6} color="#fff" /></SlideClose>
              </PanelHead>
              <SlideList>
                <Thumb>
                  <ThumbNumber>1</ThumbNumber>
                  <ThumbPage>Neural Network</ThumbPage>
                </Thumb>
              </SlideList>
            </SlidesPanel>
            <Splitter $line={1}>
              <Handle aria-label="Hide slides"><svg width="5" height="7" fill="#fff"><path d="M5 0v7l-5-3.500z" /></svg></Handle>
            </Splitter>

            <Center>
              <Info text="Help us make LibreOffice even better!" action="Get involved" />
              <Info text="Your donations support our worldwide community." action="Donate" />
              <Canvas>
                <Page>
                  <SlideTitle>Neural Network</SlideTitle>
                  <TextFrame>
                    <BulletList>
                      <Bullet>
                        <Selected>
                          Neural networks are a set of algorithms that mimic the function of a human brain. They are designed to recognize patterns, classify data, and make predictions.
                        </Selected>
                      </Bullet>
                    </BulletList>
                  </TextFrame>
                </Page>
                <ScrollV />
                <ScrollH />
              </Canvas>
            </Center>

            <Splitter $line={0}>
              <Handle aria-label="Hide sidebar"><svg width="5" height="7" fill="#fff"><path d="M0 0v7l5-3.500z" /></svg></Handle>
            </Splitter>

            <Sidebar>
              <Deck>
                <DeckTitle>
                  <svg width="8" height="13" fill="#777">
                    {[1, 6, 11].map((y) => [1, 6].map((x) => <circle key={x + '-' + y} cx={x} cy={y} r="1" />))}
                  </svg>
                  <DeckName>Properties</DeckName>
                  <PlainButton aria-label="Close sidebar"><Cross /></PlainButton>
                </DeckTitle>

                <Section title="Character" />
                <Controls $h={54}>
                  <Combo $grow>
                    <ComboSelect aria-label="Font name"><option>Calibri</option></ComboSelect>
                    <ComboArrow><Chevron /></ComboArrow>
                  </Combo>
                  <Gap $w={12} />
                  <Combo $w={101}>
                    <ComboSelect aria-label="Font size"><option>12 pt</option></ComboSelect>
                    <ComboArrow><Chevron /></ComboArrow>
                  </Combo>
                </Controls>
                <Controls $h={36}>
                  <Tool name="bold" />
                  <Tool name="italic" />
                  <Tool name="underline" />
                  <ToolArrow name="underline" />
                  <Gap $w={1} />
                  <Tool name="strike" />
                  <Tool name="shadowA" />
                  <Push />
                  <Tool name="grow" />
                  <Tool name="shrink" />
                </Controls>
                <Controls $h={55}>
                  <Tool name="fontColor" />
                  <ToolArrow name="font color" />
                  <Gap $w={13} />
                  <Tool name="highlight" />
                  <ToolArrow name="highlight" />
                  <Gap $w={14} />
                  <Tool name="clear" />
                  <Push />
                  <Tool name="superscript" />
                  <Tool name="subscript" />
                  <Gap $w={11} />
                  <Tool name="charSpacing" />
                  <ToolArrow name="spacing" />
                  <Gap $w={0} />
                </Controls>

                <Section title="Lists" />
                <Controls $h={55}>
                  <Tool name="bullets" />
                  <ToolArrow name="bullets" />
                  <Gap $w={1} />
                  <Tool name="numbers" />
                  <ToolArrow name="numbers" />
                  <Push />
                  <Tool name="indentRight" />
                  <Tool name="demote" />
                  <Tool name="moveDown" />
                  <Tool name="moveUp" />
                </Controls>

                <Section title="Paragraph" />
                <Controls $h={54}>
                  <Tool name="left" pressed />
                  <Tool name="center" />
                  <Tool name="right" />
                  <Tool name="justify" />
                  <Push />
                  <Tool name="vTop" pressed />
                  <Tool name="vCenter" />
                  <Tool name="vBottom" />
                </Controls>
                <Rule />
                <Halves>
                  <Half>
                    <HalfLabel>Spacing:</HalfLabel>
                    <HalfButtons>
                      <Tool name="paraInc" />
                      <Tool name="paraDec" />
                    </HalfButtons>
                    <Spin icon="above" label="Above paragraph spacing" initial={0.23} />
                    <Spin icon="below" label="Below paragraph spacing" initial={0} />
                    <HalfButtons>
                      <Tool name="lineSpacing" />
                      <Gap $w={1} />
                      <ToolArrow name="line spacing" />
                    </HalfButtons>
                  </Half>
                  <Half>
                    <HalfLabel>Indent:</HalfLabel>
                    <HalfButtons>
                      <Tool name="indentRight" />
                      <Tool name="indentDec" />
                      <Tool name="hanging" />
                    </HalfButtons>
                    <Spin icon="before" label="Before text indent" initial={0} />
                    <Spin icon="after" label="After text indent" initial={0} />
                    <Spin icon="indentRight" label="First line indent" initial={0} />
                  </Half>
                </Halves>
              </Deck>
              <TabBar>
                {TABS.map((t) => (
                  <Tab key={t} aria-label={t} $pressed={t === 'properties'}><Icon name={t} /></Tab>
                ))}
              </TabBar>
            </Sidebar>
          </Body>

          <StatusBar>
            <Cell $w={76} $pad={10}>Slide 1 of 1</Cell>
            <Cell $grow={532}>TextEdit: Paragraph 1, Row 2, Column 37</Cell>
            <Cell $grow={373} $pad={11}>Blank Slide</Cell>
            <Cell $w={104} $pad={11} $last>
              <svg width="15" height="12" fill="none" stroke={DARK}><path d="M5 3.500h9v7h-10v-3" /><path d="M3.500 0v7M0 3.500h7" stroke={OR} /></svg>
              1.27 / 4.45
            </Cell>
            <Cell $w={111} $pad={11}>
              <svg width="16" height="12" fill="none" stroke={DARK}><path d="M4 4.500h11v7h-11z" /><path d="M4 1.500h11M4.500 0v3M14.500 0v3M1.500 5v6" stroke={OR} /></svg>
              22.86 x 12.57
            </Cell>
            <Cell $w={23} $pad={7}><Icon name="save" size={14} /></Cell>
            <Cell $w={28} />
            <Cell $grow={389} $center>English (USA)</Cell>
            <Cell $w={22} $center $pad={0}>
              <svg width="14" height="14" fill="none" stroke={OR}><path d="M7 1v12M1 7h12M5 3l2-2l2 2M5 11l2 2l2-2M3 5l-2 2l2 2M11 5l2 2l-2 2" /></svg>
            </Cell>
            <Cell $w={143} $center $pad={4}>
              <PlainButton aria-label="Zoom out"><svg width="8" height="8" stroke="#555" strokeWidth="2"><path d="M0 4h8" /></svg></PlainButton>
              <ZoomSlider type="range" aria-label="Zoom" value={zoom} onChange={(e) => setZoom(e.target.value)} />
              <PlainButton aria-label="Zoom in"><svg width="8" height="8" stroke="#555" strokeWidth="2"><path d="M0 4h8M4 0v8" /></svg></PlainButton>
            </Cell>
            <Cell $last $w={49}>107%</Cell>
          </StatusBar>
        </Window>
      </Workspace>
    </Desktop>
  );
};

export default App;
